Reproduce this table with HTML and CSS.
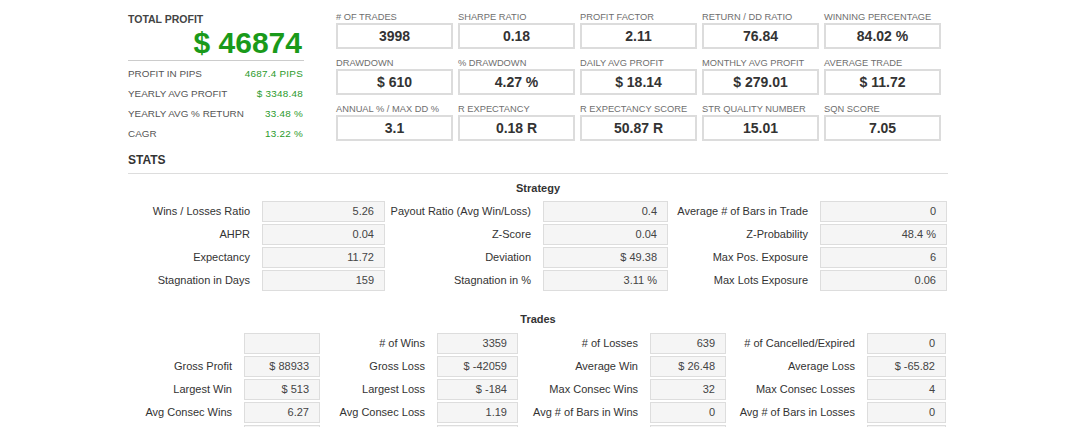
FILE: index.html
```html
<!DOCTYPE html>
<html>
<head>
<meta charset="utf-8">
<title>Stats</title>
<link rel="stylesheet" href="styles.css">
</head>
<body>
<div class="page">
  <div class="top">
    <div class="profit">
      <div class="profit-title">TOTAL PROFIT</div>
      <div class="profit-big">$ 46874</div>
      <div class="profit-row"><span class="pl">PROFIT IN PIPS</span><span class="pv">4687.4 PIPS</span></div>
      <div class="profit-row"><span class="pl">YEARLY AVG PROFIT</span><span class="pv">$ 3348.48</span></div>
      <div class="profit-row"><span class="pl">YEARLY AVG % RETURN</span><span class="pv">33.48 %</span></div>
      <div class="profit-row"><span class="pl">CAGR</span><span class="pv">13.22 %</span></div>
    </div>
    <div class="metrics">
      <div class="metric"><div class="ml"># OF TRADES</div><div class="mv">3998</div></div>
      <div class="metric"><div class="ml">SHARPE RATIO</div><div class="mv">0.18</div></div>
      <div class="metric"><div class="ml">PROFIT FACTOR</div><div class="mv">2.11</div></div>
      <div class="metric"><div class="ml">RETURN / DD RATIO</div><div class="mv">76.84</div></div>
      <div class="metric"><div class="ml">WINNING PERCENTAGE</div><div class="mv">84.02 %</div></div>
      <div class="metric"><div class="ml">DRAWDOWN</div><div class="mv">$ 610</div></div>
      <div class="metric"><div class="ml">% DRAWDOWN</div><div class="mv">4.27 %</div></div>
      <div class="metric"><div class="ml">DAILY AVG PROFIT</div><div class="mv">$ 18.14</div></div>
      <div class="metric"><div class="ml">MONTHLY AVG PROFIT</div><div class="mv">$ 279.01</div></div>
      <div class="metric"><div class="ml">AVERAGE TRADE</div><div class="mv">$ 11.72</div></div>
      <div class="metric"><div class="ml">ANNUAL % / MAX DD %</div><div class="mv">3.1</div></div>
      <div class="metric"><div class="ml">R EXPECTANCY</div><div class="mv">0.18 R</div></div>
      <div class="metric"><div class="ml">R EXPECTANCY SCORE</div><div class="mv">50.87 R</div></div>
      <div class="metric"><div class="ml">STR QUALITY NUMBER</div><div class="mv">15.01</div></div>
      <div class="metric"><div class="ml">SQN SCORE</div><div class="mv">7.05</div></div>
    </div>
  </div>

  <div class="stats-title">STATS</div>

  <div class="section-title first">Strategy</div>
  <div class="grid strategy">
    <div class="lbl">Wins / Losses Ratio</div><div class="val">5.26</div>
    <div class="lbl">Payout Ratio (Avg Win/Loss)</div><div class="val">0.4</div>
    <div class="lbl">Average # of Bars in Trade</div><div class="val">0</div>

    <div class="lbl">AHPR</div><div class="val">0.04</div>
    <div class="lbl">Z-Score</div><div class="val">0.04</div>
    <div class="lbl">Z-Probability</div><div class="val">48.4 %</div>

    <div class="lbl">Expectancy</div><div class="val">11.72</div>
    <div class="lbl">Deviation</div><div class="val">$ 49.38</div>
    <div class="lbl">Max Pos. Exposure</div><div class="val">6</div>

    <div class="lbl">Stagnation in Days</div><div class="val">159</div>
    <div class="lbl">Stagnation in %</div><div class="val">3.11 %</div>
    <div class="lbl">Max Lots Exposure</div><div class="val">0.06</div>
  </div>

  <div class="section-title second">Trades</div>
  <div class="grid trades">
    <div class="lbl"></div><div class="val"></div>
    <div class="lbl"># of Wins</div><div class="val">3359</div>
    <div class="lbl"># of Losses</div><div class="val">639</div>
    <div class="lbl"># of Cancelled/Expired</div><div class="val">0</div>

    <div class="lbl">Gross Profit</div><div class="val">$ 88933</div>
    <div class="lbl">Gross Loss</div><div class="val">$ -42059</div>
    <div class="lbl">Average Win</div><div class="val">$ 26.48</div>
    <div class="lbl">Average Loss</div><div class="val">$ -65.82</div>

    <div class="lbl">Largest Win</div><div class="val">$ 513</div>
    <div class="lbl">Largest Loss</div><div class="val">$ -184</div>
    <div class="lbl">Max Consec Wins</div><div class="val">32</div>
    <div class="lbl">Max Consec Losses</div><div class="val">4</div>

    <div class="lbl">Avg Consec Wins</div><div class="val">6.27</div>
    <div class="lbl">Avg Consec Loss</div><div class="val">1.19</div>
    <div class="lbl">Avg # of Bars in Wins</div><div class="val">0</div>
    <div class="lbl">Avg # of Bars in Losses</div><div class="val">0</div>

    <div class="lbl"></div><div class="val"></div>
    <div class="lbl"></div><div class="val"></div>
    <div class="lbl"></div><div class="val"></div>
    <div class="lbl"></div><div class="val"></div>
  </div>
</div>
</body>
</html>
```

FILE: styles.css
```css
html, body {
  margin: 0;
  padding: 0;
  background: #ffffff;
}

body {
  font-family: "Liberation Sans", Arial, sans-serif;
  color: #333333;
  overflow: hidden;
}

.page {
  width: 820px;
  margin-left: 128px;
  padding-top: 12px;
}

.top {
  display: flex;
  align-items: flex-start;
}

/* left profit panel */
.profit {
  width: 176px;
  padding-top: 1px;
}

.profit-title {
  font-size: 10.5px;
  line-height: 12px;
  font-weight: bold;
  color: #444444;
}

.profit-big {
  margin-top: 3px;
  padding-bottom: 2px;
  border-bottom: 1px solid #cccccc;
  font-size: 30px;
  line-height: 30px;
  font-weight: bold;
  color: #1a9a1a;
  text-align: right;
  padding-right: 2px;
}

.profit-big + .profit-row {
  margin-top: 3px;
}

.profit-row {
  display: flex;
  justify-content: space-between;
  height: 20px;
  line-height: 20px;
  font-size: 9.9px;
}

.pl {
  color: #555555;
}

.pv {
  color: #2b9a2b;
  letter-spacing: 0.25px;
  padding-right: 1px;
}

/* metric boxes */
.metrics {
  margin-left: 32px;
  display: grid;
  grid-template-columns: repeat(5, 117px);
  column-gap: 5px;
  row-gap: 9px;
}

.ml {
  font-size: 9.3px;
  line-height: 11px;
  color: #6e6e6e;
  white-space: nowrap;
}

.mv {
  height: 22px;
  line-height: 22px;
  border: 2px solid #dcdcdc;
  text-align: center;
  font-size: 14px;
  font-weight: bold;
  color: #333333;
}

/* stats header */
.stats-title {
  margin-top: 9px;
  padding-bottom: 6px;
  border-bottom: 1px solid #dddddd;
  font-size: 12px;
  line-height: 14px;
  font-weight: bold;
  color: #333333;
}

.section-title {
  text-align: center;
  font-size: 11px;
  line-height: 13px;
  font-weight: bold;
  color: #333333;
}

.section-title.first {
  margin-top: 8px;
  margin-bottom: 6px;
}

.section-title.second {
  margin-top: 22px;
  margin-bottom: 7px;
}

.grid {
  display: grid;
  gap: 2px;
  margin-left: 2px;
  grid-auto-rows: 21px;
}

.strategy {
  grid-template-columns: 130px 123px 154px 125px 148px 127px;
}

.trades {
  grid-template-columns: 112px 76px 113px 81px 128px 76px 137px 79px;
}

.lbl {
  font-size: 11px;
  line-height: 21px;
  text-align: right;
  padding-right: 10px;
  color: #333333;
  white-space: nowrap;
}

.val {
  font-size: 11px;
  line-height: 19px;
  text-align: right;
  padding-right: 10px;
  background: #f5f5f5;
  border: 1px solid #dddddd;
  color: #444444;
  white-space: nowrap;
}
```
